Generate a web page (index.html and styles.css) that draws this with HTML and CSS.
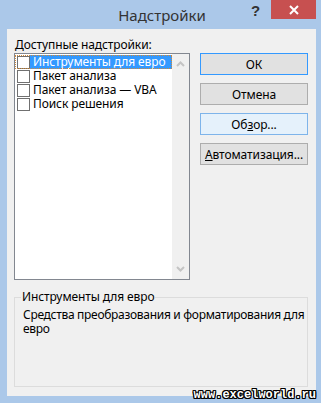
FILE: index.html
```html
<!DOCTYPE html>
<html lang="ru">

<head>
    <meta charset="UTF-8">
    <meta name="viewport" content="width=device-width, initial-scale=1.0">
    <title>Надстройки</title>
    <link rel="stylesheet" href="styles.css">
</head>

<body>
    <div class="window">
        <div class="titlebar">
            <span class="title">Надстройки</span>
            <span class="help">?</span>
            <span class="close">
                <svg width="10" height="10" viewBox="0 0 10 10">
                    <path d="M1 1 L9 9 M9 1 L1 9" stroke="#ffffff" stroke-width="2" />
                </svg>
            </span>
        </div>

        <div class="client">
            <div class="top">
                <div class="left">
                    <div class="caption"><u>Д</u>оступные надстройки:</div>
                    <div class="listbox">
                        <div class="items">
                            <div class="item focused">
                                <span class="check"></span>
                                <span class="text selected">Инструменты для евро</span>
                            </div>
                            <div class="item">
                                <span class="check"></span>
                                <span class="text">Пакет анализа</span>
                            </div>
                            <div class="item">
                                <span class="check"></span>
                                <span class="text">Пакет анализа — VBA</span>
                            </div>
                            <div class="item">
                                <span class="check"></span>
                                <span class="text">Поиск решения</span>
                            </div>
                        </div>
                        <div class="scrollbar">
                            <svg width="9" height="6" viewBox="0 0 9 6">
                                <path d="M1 5 L4.5 1.5 L8 5" fill="none" stroke="#c4c4c4" stroke-width="2" />
                            </svg>
                            <svg width="9" height="6" viewBox="0 0 9 6">
                                <path d="M1 1 L4.5 4.5 L8 1" fill="none" stroke="#c4c4c4" stroke-width="2" />
                            </svg>
                        </div>
                    </div>
                </div>
                <div class="buttons">
                    <button class="default">ОК</button>
                    <button>Отмена</button>
                    <button class="hover">Об<u>з</u>ор...</button>
                    <button><u>А</u>втоматизация...</button>
                </div>
            </div>

            <fieldset class="details">
                <legend>Инструменты для евро</legend>
                <p>Средства преобразования и форматирования для евро</p>
            </fieldset>
        </div>

        <div class="watermark">www.excelworld.ru</div>
    </div>
</body>

</html>
```

FILE: styles.css
```css
body {
    margin: 0;
    padding: 0;
    font-family: "Noto Sans", "Open Sans", sans-serif;
    font-size: 12px;
    letter-spacing: -0.1px;
    color: #000000;
}

.window {
    position: relative;
    width: 321px;
    height: 403px;
    background-color: #abc8e9;
    box-sizing: border-box;
    padding: 0 5px 0 7px;
    overflow: hidden;
}

.titlebar {
    height: 29px;
    position: relative;
    display: flex;
    justify-content: center;
    align-items: center;
}

.title {
    font-size: 15px;
    letter-spacing: 0;
    color: #333333;
    margin-top: 1px;
    margin-left: 1px;
}

.help {
    position: absolute;
    right: 56px;
    top: 2px;
    font-family: "Liberation Sans", Arial, sans-serif;
    font-weight: bold;
    font-size: 15px;
    color: #333333;
}

.close {
    position: absolute;
    right: 0;
    top: 0;
    width: 45px;
    height: 19px;
    background-color: #c75050;
    display: flex;
    justify-content: center;
    align-items: center;
}

.client {
    background-color: #f0f0f0;
    height: 367px;
    box-sizing: border-box;
    padding: 9px 8px 9px 7px;
}

.top {
    display: flex;
    gap: 10px;
}

.left {
    width: 176px;
}

.caption {
    height: 15px;
    line-height: 14px;
    padding-left: 1px;
}

.listbox {
    height: 227px;
    border: 1px solid #828790;
    background-color: #ffffff;
    box-sizing: border-box;
    display: flex;
}

.items {
    flex: 1;
    padding-top: 1px;
}

.item {
    height: 14px;
    display: flex;
    align-items: center;
    padding-left: 2px;
    box-sizing: border-box;
}

.item.focused {
    outline: 1px dotted #d08a3a;
    outline-offset: -1px;
}

.check {
    width: 13px;
    height: 13px;
    border: 1px solid #707070;
    box-sizing: border-box;
    background-color: #ffffff;
    flex-shrink: 0;
}

.text {
    height: 14px;
    line-height: 14px;
    padding-left: 3px;
    flex: 1;
    white-space: nowrap;
}

.text.selected {
    background-color: #3399ff;
    color: #ffffff;
}

.scrollbar {
    width: 17px;
    background-color: #f0f0f0;
    display: flex;
    flex-direction: column;
    justify-content: space-between;
    align-items: center;
    padding: 7px 0 7px;
}

.buttons {
    width: 108px;
    padding-top: 15px;
    display: flex;
    flex-direction: column;
    gap: 8px;
}

button {
    height: 22px;
    padding: 0;
    border: 1px solid #adadad;
    background-color: #e1e1e1;
    font-family: "Noto Sans", "Open Sans", sans-serif;
    font-size: 12px;
    letter-spacing: -0.1px;
    color: #000000;
}

button.default {
    border-color: #3399ff;
}

button.hover {
    background-color: #e5f1fb;
    border-color: #7eb4ea;
}

.details {
    margin: 10px 0 0;
    height: 97px;
    box-sizing: border-box;
    border: 1px solid #dcdcdc;
    padding: 0 0 0 8px;
}

.details legend {
    padding: 0 1px;
    margin-left: -2px;
    line-height: 14px;
}

.details p {
    margin: 4px 0 0;
    line-height: 14px;
    letter-spacing: -0.3px;
}

.watermark {
    position: absolute;
    right: 5px;
    bottom: 2px;
    font-family: "Liberation Mono", monospace;
    font-weight: bold;
    font-size: 12px;
    line-height: 12px;
    letter-spacing: 0;
    color: #ffffff;
    text-shadow: 1px 0 0 #000, -1px 0 0 #000, 0 1px 0 #000, 0 -1px 0 #000, 1px 1px 0 #000, -1px -1px 0 #000, 1px -1px 0 #000, -1px 1px 0 #000;
}
```
